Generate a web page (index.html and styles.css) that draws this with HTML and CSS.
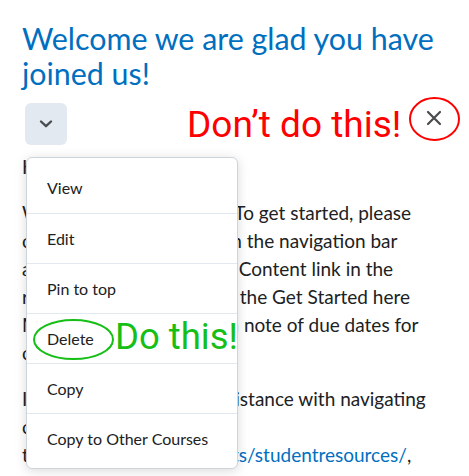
FILE: index.html
```html
<!DOCTYPE html>
<html>
<head>
    <title>Welcome</title>
    <link rel="stylesheet" href="styles.css">
</head>
<body>

    <div class="page">
        <h1 class="title">Welcome we are glad you have joined us!</h1>

        <div class="actions">
            <button class="menu-btn" aria-label="Actions">
                <svg width="14" height="10" viewBox="0 0 14 10">
                    <path d="M2 2.5 L7 7.2 L12 2.5" fill="none" stroke="#494c4e" stroke-width="2.4" stroke-linecap="round" stroke-linejoin="round"/>
                </svg>
            </button>

            <ul class="dropdown">
                <li>View</li>
                <li>Edit</li>
                <li>Pin to top</li>
                <li>Delete</li>
                <li>Copy</li>
                <li>Copy to Other Courses</li>
            </ul>
        </div>

        <div class="content">
            <p>Hello and welcome!</p>
            <p>Welcome to your course! To get started, please click on the Content tab in the navigation bar above, or you can use the Content link in the resource section. Click on the Get Started here Module. Be sure to keep a note of due dates for course assignments.</p>
            <p>If you would need any assistance with navigating course tools, please visit<br>to <a href="#">https://ecc.edu/students/studentresources/</a>,</p>
        </div>

        <!-- annotations -->
        <div class="note note-bad">Don’t do this!</div>
        <svg class="mark mark-bad" width="54" height="46" viewBox="0 0 54 46">
            <ellipse cx="26.5" cy="23" rx="24.5" ry="21" fill="none" stroke="#ff0000" stroke-width="2"/>
            <path d="M20 16 L32 28 M32 16 L20 28" stroke="#494c4e" stroke-width="2.2" stroke-linecap="round"/>
        </svg>

        <div class="note note-good">Do this!</div>
        <svg class="mark mark-good" width="84" height="44" viewBox="0 0 84 44">
            <ellipse cx="41.5" cy="21.5" rx="39.5" ry="19.5" fill="none" stroke="#16bf16" stroke-width="2"/>
        </svg>
    </div>

</body>
</html>
```

FILE: styles.css
```css
body {
    margin: 0;
    padding: 0;
    background-color: white;
    font-family: Lato, "Liberation Sans", sans-serif;
    color: #202122;
}

.page {
    position: relative;
    padding: 21px 22px 0;
}

.title {
    margin: 0;
    font-size: 30.4px;
    line-height: 35px;
    font-weight: 400;
    color: #006fbf;
}

.actions {
    position: relative;
    margin: 12px 0 0 3px;
    width: 42px;
    height: 42px;
}

.menu-btn {
    display: flex;
    align-items: center;
    justify-content: center;
    width: 42px;
    height: 42px;
    padding: 0;
    border: none;
    border-radius: 6px;
    background-color: #e3e9f1;
    cursor: pointer;
}

.dropdown {
    position: absolute;
    top: 54px;
    left: 1px;
    z-index: 10;
    width: 210px;
    margin: 0;
    padding: 5px 0;
    list-style: none;
    background: white;
    border: 1px solid #cdd5dc;
    border-radius: 6px;
    box-shadow: 0 2px 12px rgba(0, 0, 0, 0.15);
}

.dropdown li {
    display: flex;
    align-items: center;
    height: 50px;
    padding: 0 0 1px 20px;
    font-size: 16px;
    color: #202122;
    box-sizing: border-box;
}

.dropdown li + li {
    border-top: 1px solid #e3e9f1;
}

.content {
    margin-top: 8px;
}

.content p {
    margin: 0 0 18px;
    font-size: 19px;
    line-height: 28px;
}

.content a {
    color: #006fbf;
    text-decoration: none;
}

.note {
    position: absolute;
    z-index: 20;
    font-family: Roboto, "Liberation Sans", sans-serif;
    font-size: 37px;
    line-height: 37px;
    white-space: nowrap;
}

.note-bad {
    top: 106px;
    left: 187px;
    color: #ff0000;
}

.note-good {
    top: 318px;
    left: 115px;
    font-size: 36.5px;
    color: #16bf16;
}

.mark {
    position: absolute;
    z-index: 20;
}

.mark-bad {
    top: 96px;
    left: 408px;
}

.mark-good {
    top: 318px;
    left: 32px;
}
```
